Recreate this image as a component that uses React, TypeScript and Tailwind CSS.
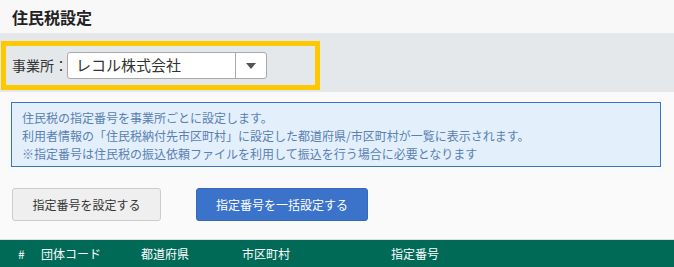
import React from "react";

export default function App() {
  return (
    <div
      className="w-[674px] h-[267px] overflow-hidden bg-[#fafafa] text-[#333]"
      style={{ fontFamily: '"Noto Sans CJK JP", "Noto Sans", sans-serif' }}
    >
      <div className="h-[33px] px-[12px] flex items-center bg-[#f8f8f8]">
        <h1 className="text-[16px] font-bold text-[#222] leading-none">住民税設定</h1>
      </div>
      <div className="h-[59px] bg-[#e4e8eb] pt-[8px]">
        <div className="ml-[1px] w-[319px] h-[49px] border-[5px] border-[#fcc800] flex items-center pl-[6px]">
          <span className="shrink-0 whitespace-nowrap text-[14px] text-[#333] w-[55px]">事業所：</span>
          <div className="shrink-0 w-[200px] h-[27px] bg-white border border-[#aaa] rounded-[3px] flex items-stretch">
            <div className="flex-1 flex items-center pl-[8px] text-[15px] text-[#333]">レコル株式会社</div>
            <div className="w-[31px] border-l border-[#aaa] flex items-center justify-center">
              <svg width="10" height="6" viewBox="0 0 10 6">
                <path d="M0 0 L10 0 L5 6 Z" fill="#555" />
              </svg>
            </div>
          </div>
        </div>
      </div>
      <div className="mt-[10px] ml-[11px] w-[650px] h-[65px] border border-[#3a74c9] bg-[#e3f0fc] pl-[10px] pt-[6px] text-[12px] leading-[18px] text-[#5a7fb0]">
        <p>住民税の指定番号を事業所ごとに設定します。</p>
        <p>利用者情報の「住民税納付先市区町村」に設定した都道府県/市区町村が一覧に表示されます。</p>
        <p>※指定番号は住民税の振込依頼ファイルを利用して振込を行う場合に必要となります</p>
      </div>
      <div className="mt-[21px] ml-[12px] flex gap-[35px]">
        <button className="w-[149px] h-[33px] bg-[#efefef] border border-[#ccc] rounded-[3px] text-[12px] text-[#333]">
          指定番号を設定する
        </button>
        <button className="w-[172px] h-[33px] bg-[#3a73c9] border border-[#3568b8] rounded-[3px] text-[12px] text-white">
          指定番号を一括設定する
        </button>
      </div>
      <div className="mt-[18px] h-[1px] bg-[#dddddd]" />
      <div className="h-[28px] bg-[#006a57] flex items-center text-[12px] text-white">
        <span className="pl-[18px] w-[41px]">#</span>
        <span className="w-[100px]">団体コード</span>
        <span className="w-[101px]">都道府県</span>
        <span className="w-[149px]">市区町村</span>
        <span>指定番号</span>
      </div>
    </div>
  );
}
